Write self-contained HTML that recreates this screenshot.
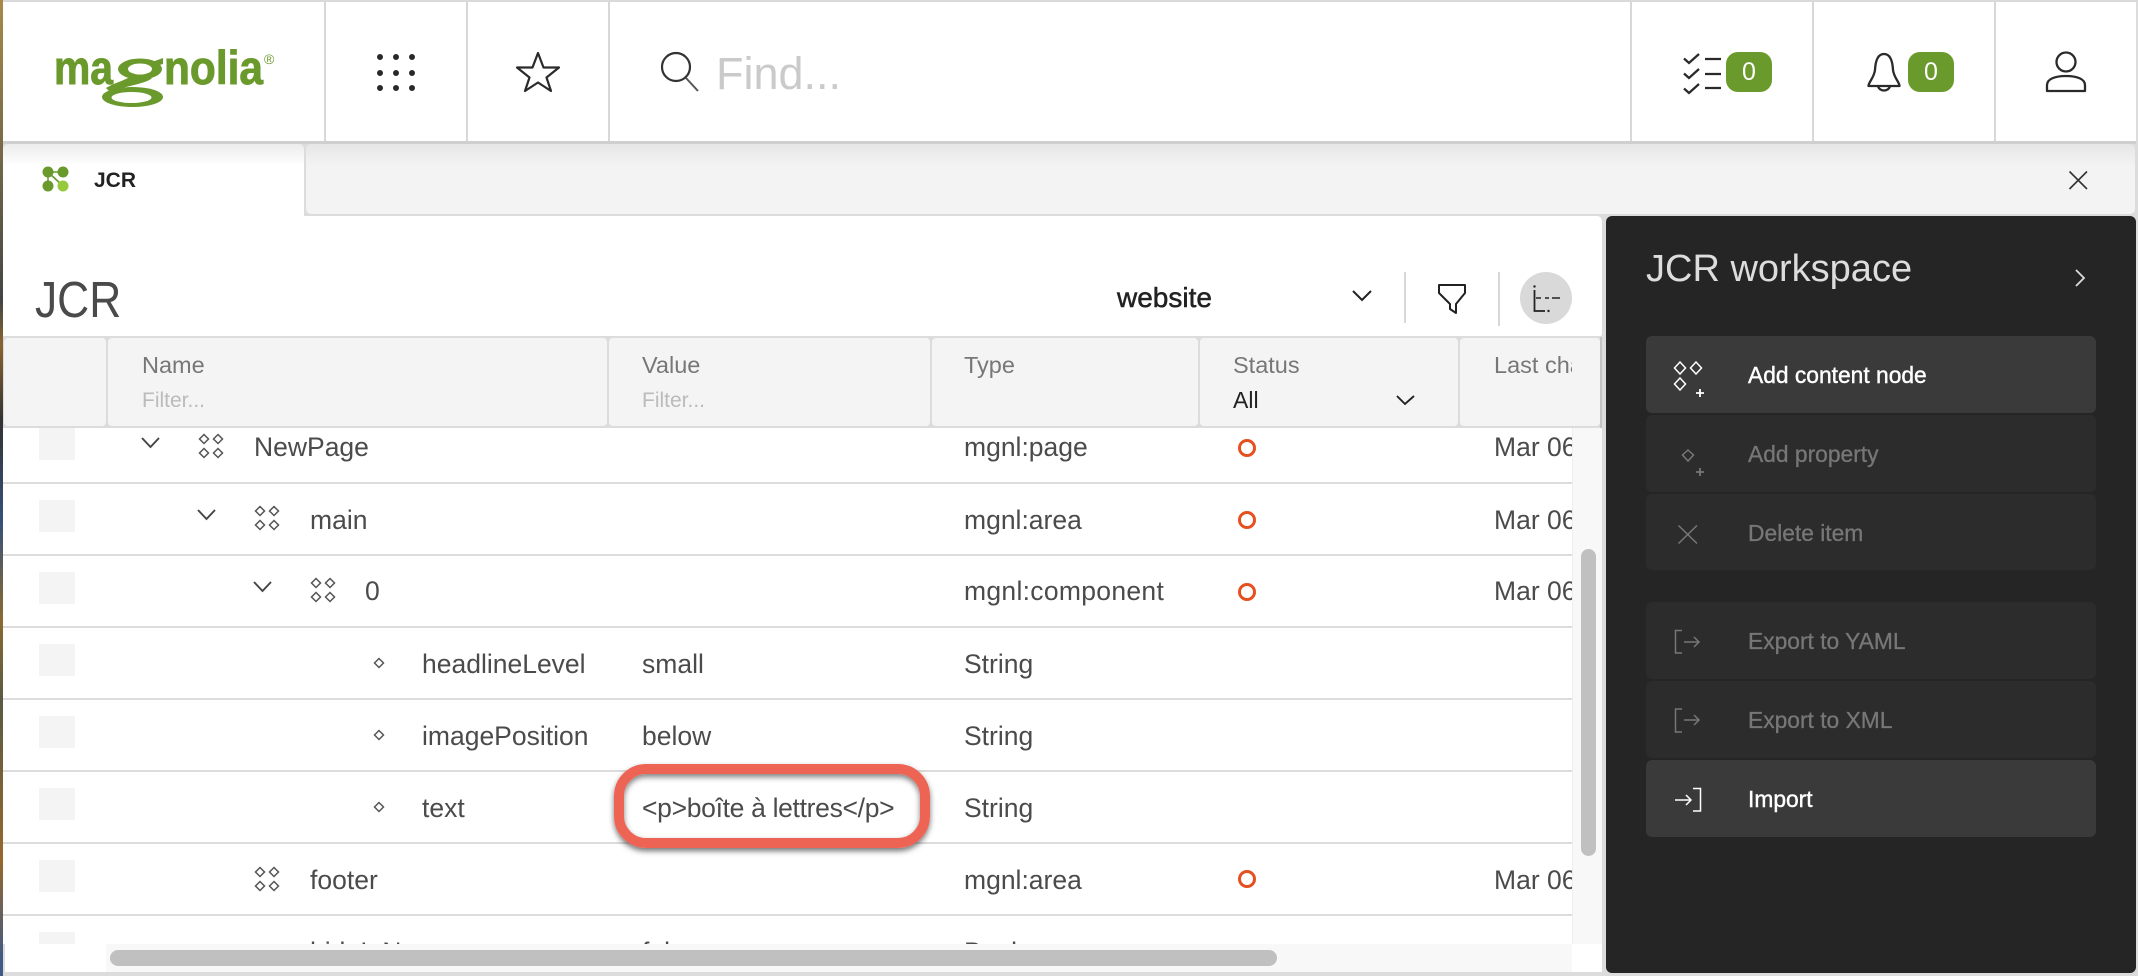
<!DOCTYPE html>
<html lang="en"><head><meta charset="utf-8"><title>JCR</title>
<style>
html,body{margin:0;padding:0;background:#dcdcdc;overflow:hidden;width:2138px;height:976px}
body{position:relative;font-family:"Liberation Sans",sans-serif;color:#4b4b4b}
div{position:absolute;box-sizing:border-box}
.t{white-space:nowrap;line-height:30px;height:30px;font-size:26.5px}
.h{font-size:23.5px;color:#777}
.f{font-size:21px;color:#bbb}
.m{font-size:22.8px;color:#777;-webkit-text-stroke:.3px #777;left:1748px}
.a{color:#fff;-webkit-text-stroke:.4px #fff}
.sq{left:39px;width:36px;height:32px;background:#f4f4f4}
.ln{left:3px;width:1569px;height:2px;background:#dcdcdc}
.col{top:338px;height:88px;background:#f4f4f4;border-radius:4px}
.btn{left:1646px;width:450px;border-radius:6px;background:#2c2c2c}
.on{background:#3a3a3a}
.bdg{width:46px;height:40px;top:52px;background:#6a992c;border-radius:12px;color:#fff;font-size:25px;line-height:40px;text-align:center}
.v{top:2px;width:2px;height:140px;background:#d8d8d8}
svg{position:absolute;left:0;top:0;overflow:hidden}
</style></head><body>

<div style="left:0;top:0;width:2138px;height:2px;background:#d9d9d9"></div>
<div style="left:3px;top:2px;width:2133px;height:140px;background:#fff"></div>
<div class="v" style="left:324px"></div><div class="v" style="left:466px"></div><div class="v" style="left:608px"></div>
<div class="v" style="left:1630px"></div><div class="v" style="left:1812px"></div><div class="v" style="left:1994px"></div>
<div style="left:3px;top:141px;width:2133px;height:3px;background:#cfcfcf"></div>

<div class="t" style="left:716px;top:47px;height:54px;line-height:54px;font-size:45px;color:#cacaca">Find...</div>
<div class="bdg" style="left:1726px">0</div>
<div class="bdg" style="left:1908px">0</div>

<!-- tabs -->
<div style="left:3px;top:144px;width:301px;height:72px;background:linear-gradient(180deg,#ececec 0,#fff 22px);border-radius:5px 5px 0 0"></div>
<div style="left:304px;top:144px;width:1832px;height:72px;background:#dcdcdc"></div>
<div style="left:306px;top:144px;width:1829px;height:70px;background:linear-gradient(180deg,#e6e6e6 0,#f3f3f3 22px);border-radius:5px"></div>
<div class="t" style="left:94px;top:166px;font-size:21px;font-weight:bold;color:#222">JCR</div>

<!-- main panel -->
<div style="left:3px;top:216px;width:1599px;height:122px;background:#fff;border-radius:0 5px 5px 0"></div>
<div class="t" style="left:35px;top:270px;height:60px;line-height:60px;font-size:51px;color:#4a4a4a;transform-origin:0 50%;transform:scaleX(.87)">JCR</div>
<div class="t" style="left:1117px;top:283px;font-size:28px;color:#222;-webkit-text-stroke:.5px #222">website</div>

<!-- tree rows -->
<div style="left:3px;top:428px;width:1569px;height:516px;background:#fff;overflow:hidden">
  <div style="left:-3px;top:-428px;width:1572px;height:944px">
    <div class="sq" style="top:428px"></div><div class="sq" style="top:500px"></div><div class="sq" style="top:572px"></div><div class="sq" style="top:644px"></div><div class="sq" style="top:716px"></div><div class="sq" style="top:788px"></div><div class="sq" style="top:860px"></div><div class="sq" style="top:932px;height:12px"></div>
    <div class="ln" style="top:482px"></div><div class="ln" style="top:554px"></div><div class="ln" style="top:626px"></div><div class="ln" style="top:698px"></div><div class="ln" style="top:770px"></div><div class="ln" style="top:842px"></div><div class="ln" style="top:914px"></div>

    <div class="t" style="left:254px;top:432px">NewPage</div><div class="t" style="left:964px;top:432px">mgnl:page</div><div class="t" style="left:1494px;top:432px">Mar 06, 2024</div>
    <div class="t" style="left:310px;top:505px">main</div><div class="t" style="left:964px;top:505px">mgnl:area</div><div class="t" style="left:1494px;top:505px">Mar 06, 2024</div>
    <div class="t" style="left:365px;top:576px">0</div><div class="t" style="left:964px;top:576px;letter-spacing:.3px">mgnl:component</div><div class="t" style="left:1494px;top:576px">Mar 06, 2024</div>
    <div class="t" style="left:422px;top:649px">headlineLevel</div><div class="t" style="left:642px;top:649px">small</div><div class="t" style="left:964px;top:649px">String</div>
    <div class="t" style="left:422px;top:721px">imagePosition</div><div class="t" style="left:642px;top:721px">below</div><div class="t" style="left:964px;top:721px">String</div>
    <div class="t" style="left:422px;top:793px">text</div><div class="t" style="left:642px;top:793px;letter-spacing:-.32px">&lt;p&gt;boîte à lettres&lt;/p&gt;</div><div class="t" style="left:964px;top:793px">String</div>
    <div class="t" style="left:310px;top:865px">footer</div><div class="t" style="left:964px;top:865px">mgnl:area</div><div class="t" style="left:1494px;top:865px">Mar 06, 2024</div>
    <div class="t" style="left:310px;top:937px;height:7px;overflow:hidden">hideInNav</div><div class="t" style="left:642px;top:937px;height:7px;overflow:hidden">false</div><div class="t" style="left:964px;top:937px;height:7px;overflow:hidden">Boolean</div>
  </div>
</div>

<!-- table header -->
<div style="left:3px;top:336px;width:1599px;height:92px;background:#dcdcdc"></div>
<div class="col" style="left:4px;width:102px"></div>
<div class="col" style="left:108px;width:499px"></div>
<div class="col" style="left:609px;width:321px"></div>
<div class="col" style="left:932px;width:266px"></div>
<div class="col" style="left:1200px;width:258px"></div>
<div class="col" style="left:1460px;width:140px"></div>
<div style="left:1600px;top:337px;width:2px;height:91px;background:#c4c4c4"></div>
<div class="t h" style="left:142px;top:350px">Name</div><div class="t f" style="left:142px;top:386px">Filter...</div>
<div class="t h" style="left:642px;top:350px">Value</div><div class="t f" style="left:642px;top:386px">Filter...</div>
<div class="t h" style="left:964px;top:350px">Type</div>
<div class="t h" style="left:1233px;top:350px">Status</div><div class="t" style="left:1233px;top:385px;font-size:23px;color:#222">All</div>
<div style="left:1494px;top:340px;width:78px;height:60px;overflow:hidden"><div class="t h" style="left:0;top:10px">Last changed</div></div>

<!-- scrollbars -->
<div style="left:1572px;top:428px;width:30px;height:516px;background:#f8f8f8;border-left:1px solid #eee"></div>
<div style="left:1581px;top:549px;width:15px;height:307px;background:#c0c0c0;border-radius:8px"></div>
<div style="left:5px;top:944px;width:1567px;height:28px;background:#f8f8f8"></div>
<div style="left:5px;top:944px;width:101px;height:28px;background:#fff"></div>
<div style="left:110px;top:950px;width:1167px;height:16px;background:#c0c0c0;border-radius:8px"></div>
<div style="left:1572px;top:944px;width:30px;height:28px;background:#fff"></div>

<!-- highlight -->
<div style="left:614px;top:764px;width:316px;height:84px;border:10px solid #ee6454;border-radius:32px;box-shadow:0 3px 6px rgba(0,0,0,.55),inset 0 3px 6px rgba(0,0,0,.5)"></div>

<!-- side panel -->
<div style="left:1606px;top:216px;width:530px;height:757px;background:#252525;border-radius:6px"></div>
<div class="t" style="left:1646px;top:249px;height:40px;line-height:40px;font-size:38px;color:#ddd">JCR workspace</div>
<div class="btn on" style="top:336px;height:77px"></div>
<div class="btn" style="top:415px;height:77px"></div>
<div class="btn" style="top:494px;height:76px"></div>
<div class="btn" style="top:602px;height:77px"></div>
<div class="btn" style="top:681px;height:77px"></div>
<div class="btn on" style="top:760px;height:77px"></div>
<div class="t m a" style="top:360px">Add content node</div>
<div class="t m" style="top:439px">Add property</div>
<div class="t m" style="top:518px">Delete item</div>
<div class="t m" style="top:626px">Export to YAML</div>
<div class="t m" style="top:705px">Export to XML</div>
<div class="t m a" style="top:784px">Import</div>

<!-- left edge strip -->
<div style="left:0;top:0;width:2.5px;height:976px;background:linear-gradient(180deg,#a88a48 0,#7a6c48 140px,#444 300px,#8a6430 345px,#333 420px,#34507a 520px,#8a6a30 620px,#5a5a42 700px,#96682c 860px,#3f5a84 960px)"></div>

<svg width="2138" height="976" viewBox="0 0 2138 976" fill="none">
  <defs>
    <path id="d" d="M0-4.5 4.5 0 0 4.5-4.5 0Z"/>
    <g id="n" stroke="#555" stroke-width="1.5"><use href="#d" x="-7" y="-7"/><use href="#d" x="7" y="-7"/><use href="#d" x="-7" y="7"/><use href="#d" x="7" y="7"/></g>
  </defs>

  <!-- logo -->
  <g fill="#6a992c" stroke="#6a992c" stroke-width=".9" font-family="'Liberation Sans',sans-serif" font-weight="bold">
    <text x="54" y="84" font-size="47" textLength="59" lengthAdjust="spacingAndGlyphs">ma</text>
    <text x="131" y="76" font-size="30">g</text>
    <text x="164" y="84" font-size="47" textLength="99" lengthAdjust="spacingAndGlyphs">nolia</text>
  </g>
  <text x="264" y="64" font-size="14" fill="#6a992c" font-family="'Liberation Sans',sans-serif">®</text>
  <ellipse cx="140" cy="69" rx="22" ry="10.500" fill="#6a992c"/>
  <ellipse cx="140" cy="69" rx="12" ry="5.500" fill="#fff"/>
  <path d="M128 78H152C146 84 128 85 110 92L106 88C112 84 120 82 128 78Z" fill="#6a992c"/>
  <path d="M152 62 163 58V64L156 66Z" fill="#6a992c"/>
  <ellipse cx="132.500" cy="97" rx="30.500" ry="10" fill="#6a992c"/>
  <ellipse cx="131.500" cy="97.500" rx="20" ry="5.500" fill="#fff"/>

  <!-- header icons -->
  <g fill="#2a2a2a">
    <circle cx="380" cy="57" r="3"/><circle cx="396" cy="57" r="3"/><circle cx="412" cy="57" r="3"/>
    <circle cx="380" cy="73" r="3"/><circle cx="396" cy="73" r="3"/><circle cx="412" cy="73" r="3"/>
    <circle cx="380" cy="88" r="3"/><circle cx="396" cy="88" r="3"/><circle cx="412" cy="88" r="3"/>
  </g>
  <path d="M538 53 543.500 67.500 559 67.500 546.500 77.500 551 91 538 82.500 525 91 529.500 77.500 517 67.500 532.500 67.500Z" stroke="#2a2a2a" stroke-width="2.2" stroke-linejoin="round"/>
  <circle cx="676" cy="67" r="14" stroke="#333" stroke-width="2.2"/>
  <path d="M686 78 698 91" stroke="#555" stroke-width="2"/>
  <g stroke="#2a2a2a" stroke-width="2.3">
    <path d="M1684 58.500 1689 63 1699 54M1684 73.500 1689 78 1699 69M1684 88.500 1689 93 1699 84M1705 59H1721M1705 74H1721M1705 88H1721"/>
    <path d="M1868.500 86C1868.500 82 1874 78 1875 70 1875.500 60 1878 54 1884 54 1890 54 1892.500 60 1893 70 1894 78 1899.500 82 1899.500 86Z" stroke-linejoin="round"/>
    <path d="M1878 86.500A6.500 6.500 0 0 0 1890 86.500"/>
    <ellipse cx="2066" cy="62" rx="9.500" ry="9.500"/>
    <path d="M2047 91V85C2047 79 2055 76 2066 76 2077 76 2085 79 2085 85V91Z" stroke-linejoin="round"/>
  </g>

  <!-- tab icon -->
  <path d="M48 172H63M48 172V186M48 172 63 186" stroke="#6a992c" stroke-width="1.600"/>
  <circle cx="48" cy="172" r="5.500" fill="#6a992c"/><circle cx="63" cy="172" r="5.500" fill="#6a992c"/><circle cx="48" cy="186" r="5.500" fill="#6a992c"/><circle cx="63" cy="186" r="5.500" fill="#97c93c"/>
  <path d="M2069.500 171.500 2087 189M2087 171.500 2069.500 189" stroke="#333" stroke-width="1.600"/>

  <!-- toolbar -->
  <path d="M1353 291 1362 300 1371 291" stroke="#222" stroke-width="2"/>
  <path d="M1405 272V323M1499 272V326" stroke="#d8d8d8" stroke-width="2"/>
  <path d="M1439 285H1465V293L1456 304V313L1450 309V304L1439 293Z" stroke="#222" stroke-width="2" stroke-linejoin="round"/>
  <circle cx="1546" cy="298" r="26" fill="#d9d9d9"/>
  <path d="M1534.500 290V311H1545" stroke="#222" stroke-width="1.800"/>
  <circle cx="1534.500" cy="286.500" r="1.200" fill="#222"/><circle cx="1548.500" cy="311" r="1.200" fill="#222"/>
  <path d="M1536 298H1541M1545 298H1549M1552 298H1560" stroke="#222" stroke-width="1.500"/>
  <path d="M1397 396 1405 404 1414 396" stroke="#222" stroke-width="1.900"/>

  <!-- tree icons -->
  <g stroke="#444" stroke-width="1.900">
    <path d="M142 438 150.500 447 159 438M198 510 206.500 519 215 510M254 582 262.500 591 271 582"/>
  </g>
  <use href="#n" transform="translate(211 446)"/>
  <use href="#n" transform="translate(267 518)"/>
  <use href="#n" transform="translate(323 590)"/>
  <use href="#n" transform="translate(267 879)"/>
  <g stroke="#555" stroke-width="1.500">
    <use href="#d" x="379" y="663"/><use href="#d" x="379" y="735"/><use href="#d" x="379" y="807"/>
  </g>
  <g stroke="#e5501f" stroke-width="3">
    <circle cx="1247" cy="448" r="7.500"/><circle cx="1247" cy="520" r="7.500"/><circle cx="1247" cy="592" r="7.500"/><circle cx="1247" cy="879" r="7.500"/>
  </g>

  <!-- side panel icons -->
  <path d="M2076 270 2084 278 2076 286" stroke="#ddd" stroke-width="1.800"/>
  <g stroke="#fff" stroke-width="1.500">
    <path d="M1680 362 1685.500 368 1680 374 1674.500 368ZM1696 362 1701.500 368 1696 374 1690.500 368ZM1680 378 1685.500 384 1680 390 1674.500 384Z"/>
    <path d="M1696 393H1704M1700 389V397" stroke-width="1.800"/>
  </g>
  <g stroke="#777" stroke-width="1.500">
    <path d="M1688 450 1693.500 455 1688 461 1682.500 455Z"/>
    <path d="M1696 472H1704M1700 468V476" stroke-width="1.800"/>
    <path d="M1678.500 525.500 1697 543.500M1697 525.500 1678.500 543.500"/>
    <path d="M1682 630.500H1675.500V653H1682M1684 642H1699M1694 637 1699 642 1694 647"/>
    <path d="M1682 709H1675.500V732H1682M1684 720H1699M1694 715 1699 720 1694 725"/>
  </g>
  <path d="M1693 788.500H1700.500V811H1693M1675 800H1691M1686 795 1691 800 1686 805" stroke="#fff" stroke-width="1.500"/>
</svg>
</body></html>
